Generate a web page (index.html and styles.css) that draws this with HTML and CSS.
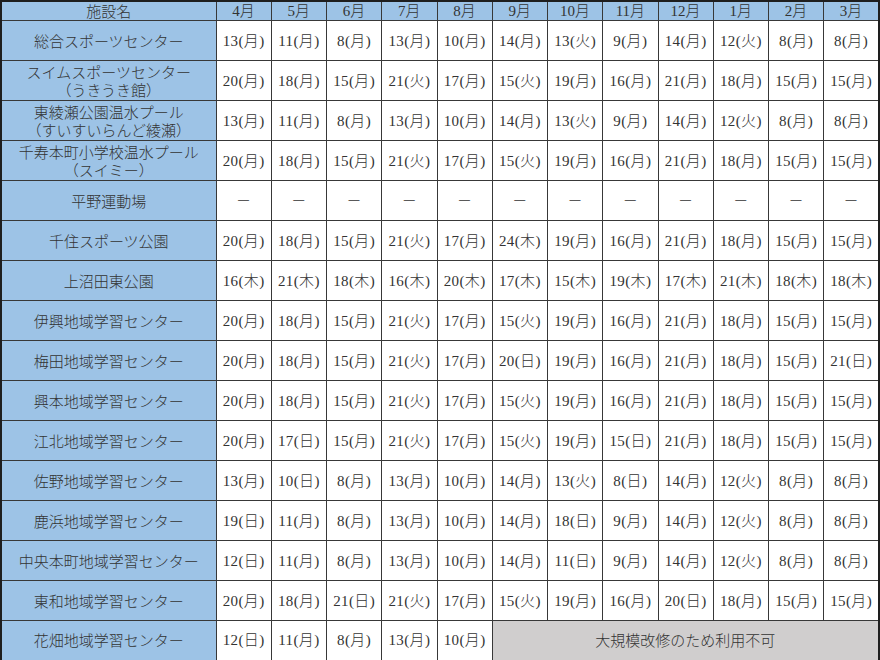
FILE: index.html
```html
<!DOCTYPE html>
<html lang="ja">
<head>
<meta charset="utf-8">
<title>施設一覧</title>
<link rel="stylesheet" href="styles.css">
</head>
<body>
<table class="sched">
<colgroup><col class="c-name"><col span="12"></colgroup>
<thead>
<tr class="hrow"><th>施設名</th><th>4月</th><th>5月</th><th>6月</th><th>7月</th><th>8月</th><th>9月</th><th>10月</th><th>11月</th><th>12月</th><th>1月</th><th>2月</th><th>3月</th></tr>
</thead>
<tbody>
<tr><th>総合スポーツセンター</th><td>13(月)</td><td>11(月)</td><td>8(月)</td><td>13(月)</td><td>10(月)</td><td>14(月)</td><td>13(火)</td><td>9(月)</td><td>14(月)</td><td>12(火)</td><td>8(月)</td><td>8(月)</td></tr>
<tr><th>スイムスポーツセンター<br>（うきうき館）</th><td>20(月)</td><td>18(月)</td><td>15(月)</td><td>21(火)</td><td>17(月)</td><td>15(火)</td><td>19(月)</td><td>16(月)</td><td>21(月)</td><td>18(月)</td><td>15(月)</td><td>15(月)</td></tr>
<tr><th>東綾瀬公園温水プール<br>（すいすいらんど綾瀬）</th><td>13(月)</td><td>11(月)</td><td>8(月)</td><td>13(月)</td><td>10(月)</td><td>14(月)</td><td>13(火)</td><td>9(月)</td><td>14(月)</td><td>12(火)</td><td>8(月)</td><td>8(月)</td></tr>
<tr><th>千寿本町小学校温水プール<br>（スイミー）</th><td>20(月)</td><td>18(月)</td><td>15(月)</td><td>21(火)</td><td>17(月)</td><td>15(火)</td><td>19(月)</td><td>16(月)</td><td>21(月)</td><td>18(月)</td><td>15(月)</td><td>15(月)</td></tr>
<tr><th>平野運動場</th><td>－</td><td>－</td><td>－</td><td>－</td><td>－</td><td>－</td><td>－</td><td>－</td><td>－</td><td>－</td><td>－</td><td>－</td></tr>
<tr><th>千住スポーツ公園</th><td>20(月)</td><td>18(月)</td><td>15(月)</td><td>21(火)</td><td>17(月)</td><td>24(木)</td><td>19(月)</td><td>16(月)</td><td>21(月)</td><td>18(月)</td><td>15(月)</td><td>15(月)</td></tr>
<tr><th>上沼田東公園</th><td>16(木)</td><td>21(木)</td><td>18(木)</td><td>16(木)</td><td>20(木)</td><td>17(木)</td><td>15(木)</td><td>19(木)</td><td>17(木)</td><td>21(木)</td><td>18(木)</td><td>18(木)</td></tr>
<tr><th>伊興地域学習センター</th><td>20(月)</td><td>18(月)</td><td>15(月)</td><td>21(火)</td><td>17(月)</td><td>15(火)</td><td>19(月)</td><td>16(月)</td><td>21(月)</td><td>18(月)</td><td>15(月)</td><td>15(月)</td></tr>
<tr><th>梅田地域学習センター</th><td>20(月)</td><td>18(月)</td><td>15(月)</td><td>21(火)</td><td>17(月)</td><td>20(日)</td><td>19(月)</td><td>16(月)</td><td>21(月)</td><td>18(月)</td><td>15(月)</td><td>21(日)</td></tr>
<tr><th>興本地域学習センター</th><td>20(月)</td><td>18(月)</td><td>15(月)</td><td>21(火)</td><td>17(月)</td><td>15(火)</td><td>19(月)</td><td>16(月)</td><td>21(月)</td><td>18(月)</td><td>15(月)</td><td>15(月)</td></tr>
<tr><th>江北地域学習センター</th><td>20(月)</td><td>17(日)</td><td>15(月)</td><td>21(火)</td><td>17(月)</td><td>15(火)</td><td>19(月)</td><td>15(日)</td><td>21(月)</td><td>18(月)</td><td>15(月)</td><td>15(月)</td></tr>
<tr><th>佐野地域学習センター</th><td>13(月)</td><td>10(日)</td><td>8(月)</td><td>13(月)</td><td>10(月)</td><td>14(月)</td><td>13(火)</td><td>8(日)</td><td>14(月)</td><td>12(火)</td><td>8(月)</td><td>8(月)</td></tr>
<tr><th>鹿浜地域学習センター</th><td>19(日)</td><td>11(月)</td><td>8(月)</td><td>13(月)</td><td>10(月)</td><td>14(月)</td><td>18(日)</td><td>9(月)</td><td>14(月)</td><td>12(火)</td><td>8(月)</td><td>8(月)</td></tr>
<tr><th>中央本町地域学習センター</th><td>12(日)</td><td>11(月)</td><td>8(月)</td><td>13(月)</td><td>10(月)</td><td>14(月)</td><td>11(日)</td><td>9(月)</td><td>14(月)</td><td>12(火)</td><td>8(月)</td><td>8(月)</td></tr>
<tr><th>東和地域学習センター</th><td>20(月)</td><td>18(月)</td><td>21(日)</td><td>21(火)</td><td>17(月)</td><td>15(火)</td><td>19(月)</td><td>16(月)</td><td>20(日)</td><td>18(月)</td><td>15(月)</td><td>15(月)</td></tr>
<tr><th>花畑地域学習センター</th><td>12(日)</td><td>11(月)</td><td>8(月)</td><td>13(月)</td><td>10(月)</td><td colspan="7" class="closed">大規模改修のため利用不可</td></tr>
</tbody>
</table>
</body>
</html>
```
FILE: styles.css
```css
html, body {
  margin: 0;
  padding: 0;
  background: #ffffff;
}
.sched {
  width: 880px;
  height: 660px;
  border-collapse: collapse;
  table-layout: fixed;
  border: 2px solid #1e1e1e;
  font-family: "Liberation Serif", "Noto Sans CJK JP", serif;
  font-size: 15px;
  font-weight: 300;
  color: #333333;
}
.c-name {
  width: 215px;
}
.sched th,
.sched td {
  border: 1px solid #383838;
  padding: 0;
  text-align: center;
  vertical-align: middle;
  font-weight: 300;
  line-height: 18px;
  white-space: nowrap;
  overflow: hidden;
}
.sched td {
  letter-spacing: 0.4px;
}
.sched th {
  background: #9dc3e6;
  font-family: "Noto Sans CJK JP", sans-serif;
  font-size: 15px;
}
.hrow th {
  height: 18px;
  line-height: 18px;
  font-family: "Liberation Serif", "Noto Sans CJK JP", serif;
}
.hrow th:first-child {
  font-family: "Noto Sans CJK JP", sans-serif;
}
.sched tbody tr {
  height: 40px;
}
.sched td.closed {
  background: #d0cece;
  font-family: "Noto Sans CJK JP", sans-serif;
  letter-spacing: 0;
}
```
